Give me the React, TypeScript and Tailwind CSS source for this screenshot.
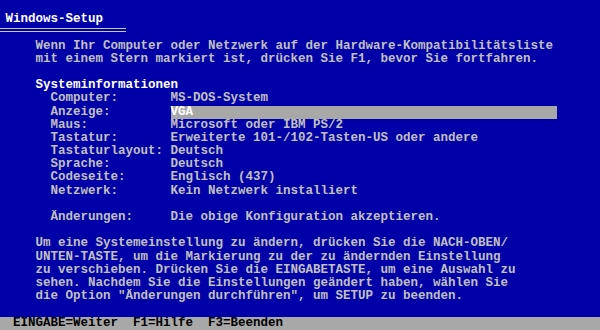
const intro = [
  'Wenn Ihr Computer oder Netzwerk auf der Hardware-Kompatibilitätsliste',
  'mit einem Stern markiert ist, drücken Sie F1, bevor Sie fortfahren.',
];

const info: [string, string][] = [
  ['Computer:', 'MS-DOS-System'],
  ['Anzeige:', 'VGA'],
  ['Maus:', 'Microsoft oder IBM PS/2'],
  ['Tastatur:', 'Erweiterte 101-/102-Tasten-US oder andere'],
  ['Tastaturlayout:', 'Deutsch'],
  ['Sprache:', 'Deutsch'],
  ['Codeseite:', 'Englisch (437)'],
  ['Netzwerk:', 'Kein Netzwerk installiert'],
];

const help = [
  'Um eine Systemeinstellung zu ändern, drücken Sie die NACH-OBEN/',
  'UNTEN-TASTE, um die Markierung zu der zu ändernden Einstellung',
  'zu verschieben. Drücken Sie die EINGABETASTE, um eine Auswahl zu',
  'sehen. Nachdem Sie die Einstellungen geändert haben, wählen Sie',
  'die Option "Änderungen durchführen", um SETUP zu beenden.',
];

// one text-mode line: 80 cols x 7.5px, 25 rows x 13.2px
function Row({ children, className = '' }: { children?: React.ReactNode; className?: string }) {
  return <div className={`h-[13.2px] whitespace-pre ${className}`}>{children}</div>;
}

export default function App() {
  const selected = 'Anzeige:';

  return (
    <div
      className="w-[600px] h-[330px] overflow-hidden bg-[#0000a8] text-[#c0c0c0] font-bold text-[12.5px] leading-[13.2px] flex flex-col"
      style={{ fontFamily: '"Liberation Mono", "DejaVu Sans Mono", monospace' }}
    >
      <Row />
      <Row className="pl-[5.5px] text-white">Windows-Setup</Row>

      {/* double rule under the title */}
      <Row>
        <div className="mt-[2px] h-[4px] w-[126px] border-y border-[#c8c8c8]" />
      </Row>

      {intro.map((t) => (
        <Row key={t} className="pl-[35.5px]">
          {t}
        </Row>
      ))}
      <Row />

      <Row className="pl-[35.5px] text-white">Systeminformationen</Row>
      {info.map(([label, value]) => (
        <Row key={label} className="pl-[50.5px] flex">
          <span className="w-[120px] shrink-0">{label}</span>
          {label === selected ? (
            <span className="bg-[#a8a8a8] text-white w-[386px]">{value}</span>
          ) : (
            <span>{value}</span>
          )}
        </Row>
      ))}
      <Row />
      <Row className="pl-[50.5px] flex">
        <span className="w-[120px] shrink-0">Änderungen:</span>
        <span>Die obige Konfiguration akzeptieren.</span>
      </Row>
      <Row />

      {help.map((t) => (
        <Row key={t} className="pl-[35.5px]">
          {t}
        </Row>
      ))}
      <Row />

      <Row className="pl-[13px] bg-[#a8a8a8] text-black">EINGABE=Weiter  F1=Hilfe  F3=Beenden</Row>
    </div>
  );
}
